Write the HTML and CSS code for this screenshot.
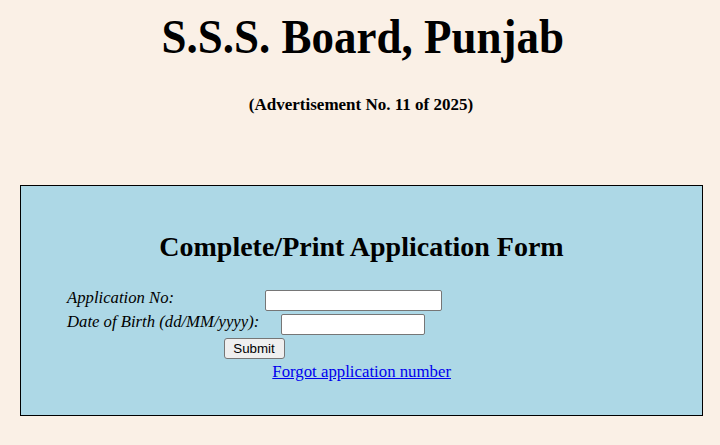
FILE: index.html
```html
<!DOCTYPE html>
<html lang="en">
<head>
<meta charset="utf-8">
<title>S.S.S. Board, Punjab</title>
<link rel="stylesheet" href="styles.css">
</head>
<body>
<header class="masthead">
  <h1 class="title"><span class="title-text">S.S.S. Board, Punjab</span></h1>
  <p class="subtitle">(Advertisement No. 11 of 2025)</p>
</header>
<main class="panel">
  <h2 class="panel-title">Complete/Print Application Form</h2>
  <form class="form" onsubmit="return false;">
    <div class="grid">
      <label class="label" for="appno">Application No:</label>
      <div class="cell"><input class="input input-wide" id="appno" type="text"></div>
      <label class="label" for="dob">Date of Birth (dd/MM/yyyy):</label>
      <div class="cell"><input class="input input-narrow" id="dob" type="text"></div>
      <div class="submit-row"><button class="btn" type="submit">Submit</button></div>
    </div>
    <div class="link-row"><a class="link" href="#">Forgot application number</a></div>
  </form>
</main>
</body>
</html>
```
FILE: styles.css
```css
html, body {
  margin: 0;
  padding: 0;
}
body {
  background: #faf0e6;
  color: #000;
  font-family: "Liberation Serif", "Times New Roman", serif;
  width: 720px;
  height: 445px;
  overflow: hidden;
}
.masthead {
  text-align: center;
  padding-top: 9px;
}
.title {
  margin: 0 0 0 6px;
  font-size: 48px;
  line-height: 56px;
  font-weight: bold;
}
.title-text {
  display: inline-block;
  transform: scaleX(0.937);
}
.subtitle {
  margin: 30px 0 0 2px;
  font-size: 17px;
  line-height: 20px;
  font-weight: bold;
}
.panel {
  margin: 70px 0 0 20px;
  width: 683px;
  box-sizing: border-box;
  border: 1px solid #000;
  background: #add8e6;
  padding: 45px 0 33px 0;
}
.panel-title {
  margin: 0;
  text-align: center;
  font-size: 28px;
  line-height: 32px;
  font-weight: bold;
}
.form {
  margin: 25px 0 0 43px;
}
.grid {
  display: grid;
  grid-template-columns: 198px 182px;
  grid-auto-rows: 24px;
  width: 380px;
}
.label {
  font-style: italic;
  font-size: 16.7px;
  line-height: 20px;
  padding-left: 3px;
  white-space: nowrap;
}
.cell {
  display: flex;
  align-items: center;
  justify-content: center;
}
.input {
  box-sizing: border-box;
  height: 21px;
  border: 1px solid #767676;
  border-radius: 2px;
  background: #fff;
  padding: 1px 2px;
  font-family: "Liberation Sans", Arial, sans-serif;
  font-size: 13.33px;
  margin: 0;
}
.input-wide { width: 177px; }
.input-narrow { width: 144px; }
.submit-row {
  grid-column: 1 / span 2;
  display: flex;
  align-items: center;
  justify-content: center;
}
.btn {
  box-sizing: border-box;
  width: 61px;
  height: 21px;
  margin: 0;
  padding: 0 6px;
  border: 1px solid #767676;
  border-radius: 3px;
  background: #efefef;
  color: #000;
  font-family: "Liberation Sans", Arial, sans-serif;
  font-size: 13.33px;
  line-height: 19px;
}
.link-row {
  width: 387px;
  text-align: right;
  margin-top: 2px;
  font-size: 16.8px;
  line-height: 20px;
}
.link {
  color: #0000ee;
  text-decoration: underline;
}
```
